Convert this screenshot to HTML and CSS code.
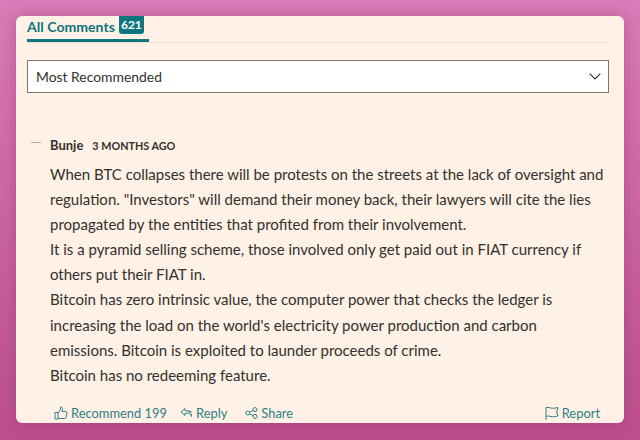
FILE: index.html
```html
<!DOCTYPE html>
<html lang="en">
<head>
<meta charset="UTF-8">
<meta name="viewport" content="width=device-width, initial-scale=1.0">
<title>All Comments</title>
<link rel="stylesheet" href="styles.css">
</head>
<body>

<div class="card">
    <div class="tabs">
        <div class="tab">All Comments <span class="count">621</span></div>
    </div>

    <div class="sort">
        <span>Most Recommended</span>
        <svg class="chevron" width="12" height="7" viewBox="0 0 12 7" fill="none" stroke="#33302e" stroke-width="1.1">
            <path d="M.7.7L6 6l5.300-5.300"/>
        </svg>
    </div>

    <div class="comment">
        <div class="meta">
            <span class="dash"></span>
            <span class="author">Bunje</span>
            <span class="time">3 MONTHS AGO</span>
        </div>
        <div class="body-text">
            <p>When BTC collapses there will be protests on the streets at the lack of oversight and regulation. "Investors" will demand their money back, their lawyers will cite the lies propagated by the entities that profited from their involvement.</p>
            <p>It is a pyramid selling scheme, those involved only get paid out in FIAT currency if others put their FIAT in.</p>
            <p>Bitcoin has zero intrinsic value, the computer power that checks the ledger is increasing the load on the world's electricity power production and carbon emissions. Bitcoin is exploited to launder proceeds of crime.</p>
            <p>Bitcoin has no redeeming feature.</p>
        </div>
    </div>

    <div class="actions">
        <a class="action">
            <svg width="14" height="14" viewBox="0 0 14 14" fill="none" stroke="#2f7f85" stroke-width="1">
                <path d="M1 6.500h3v6.500H1zM4 7l2.500-3.500V1.200c1.300-.4 2 .5 2 1.500 0 1-.5 2-.5 2.800h3.800c1 0 1.400.8 1.200 1.600l-1.100 4.600c-.2.6-.6.8-1.200.8H6c-.8 0-1.300-.3-2-.7"/>
            </svg>
            Recommend 199
        </a>
        <a class="action">
            <svg width="13" height="12" viewBox="0 0 13 12" fill="none" stroke="#2f7f85" stroke-width="1">
                <path d="M5 1.500L1 5l4 3.500V6.300c2.800-.5 4.800 0 6.500 3.200.4-3.500-2.200-5.800-6.500-6z"/>
                <path d="M8 3.800l3.500 1"/>
            </svg>
            Reply
        </a>
        <a class="action share">
            <svg width="13" height="12" viewBox="0 0 13 12" fill="none" stroke="#2f7f85" stroke-width="1">
                <circle cx="2.800" cy="6" r="2"/>
                <circle cx="10" cy="2.600" r="2"/>
                <circle cx="10" cy="9.400" r="2"/>
                <path d="M4.600 5.100l3.600-1.700M4.600 6.900l3.600 1.700"/>
            </svg>
            Share
        </a>
        <a class="action report">
            <svg width="14" height="14" viewBox="0 0 14 14" fill="none" stroke="#2f7f85" stroke-width="1">
                <path d="M1 14V1.500c3-.6 4.500.8 6.500.8 2 0 3.500-.4 5.500-.8L11.700 6 13 10c-2 .3-3.500.8-5.500.8S4 9.500 1 10.300"/>
            </svg>
            Report
        </a>
    </div>
</div>

</body>
</html>
```

FILE: styles.css
```css
html, body {
    height: 100%;
}

body {
    margin: 0;
    padding: 16px 16px 17px;
    box-sizing: border-box;
    background: linear-gradient(to bottom, #d97bb8, #bd4d8c);
    color: #33302e;
    font-family: Lato, "Open Sans", sans-serif;
    overflow: hidden;
}

.card {
    height: 100%;
    box-sizing: border-box;
    padding: 0 15px 0 11px;
    background-color: #fff1e5;
    border-radius: 6px;
    box-shadow: 0 0 14px rgba(120, 40, 90, 0.35);
    display: flex;
    flex-direction: column;
}

.tabs {
    height: 26px;
    border-bottom: 1px solid #f2dfce;
}

.tab {
    display: flex;
    gap: 4px;
    height: 23px;
    width: 122px;
    border-bottom: 3px solid #0d7680;
    color: #0d7680;
    font-size: 14.100px;
    line-height: 21px;
    font-weight: 700;
}

.count {
    width: 25px;
    height: 18px;
    background-color: #0d7680;
    border-radius: 0 0 3px 3px;
    color: #ffffff;
    font-size: 12px;
    line-height: 18px;
    text-align: center;
}

.sort {
    display: flex;
    align-items: center;
    justify-content: space-between;
    height: 31px;
    margin-top: 17px;
    padding: 0 7px 0 8px;
    background-color: #ffffff;
    border: 1px solid #7c7570;
    font-size: 13.900px;
}

.comment {
    margin-top: 42px;
    flex: 1;
}

.meta {
    display: flex;
    align-items: center;
    height: 20px;
    font-size: 12px;
}

.dash {
    width: 10px;
    height: 1px;
    margin: 0 9px 5px 4px;
    background-color: #b5a99e;
}

.author {
    font-size: 13px;
    font-weight: 700;
    margin-right: 9px;
}

.time {
    font-size: 10.800px;
    font-weight: 700;
}

.body-text {
    margin: 7px 4px 0 23px;
    font-size: 15px;
    line-height: 25.100px;
}

.body-text p {
    margin: 0;
}

.actions {
    display: flex;
    align-items: center;
    gap: 13px;
    height: 20px;
    padding: 0 9px 0 27px;
    color: #2f7f85;
    font-size: 12.900px;
}

.action {
    display: flex;
    align-items: center;
    gap: 3px;
}

.share {
    margin-left: 5px;
}

.report {
    margin-left: auto;
}
```
